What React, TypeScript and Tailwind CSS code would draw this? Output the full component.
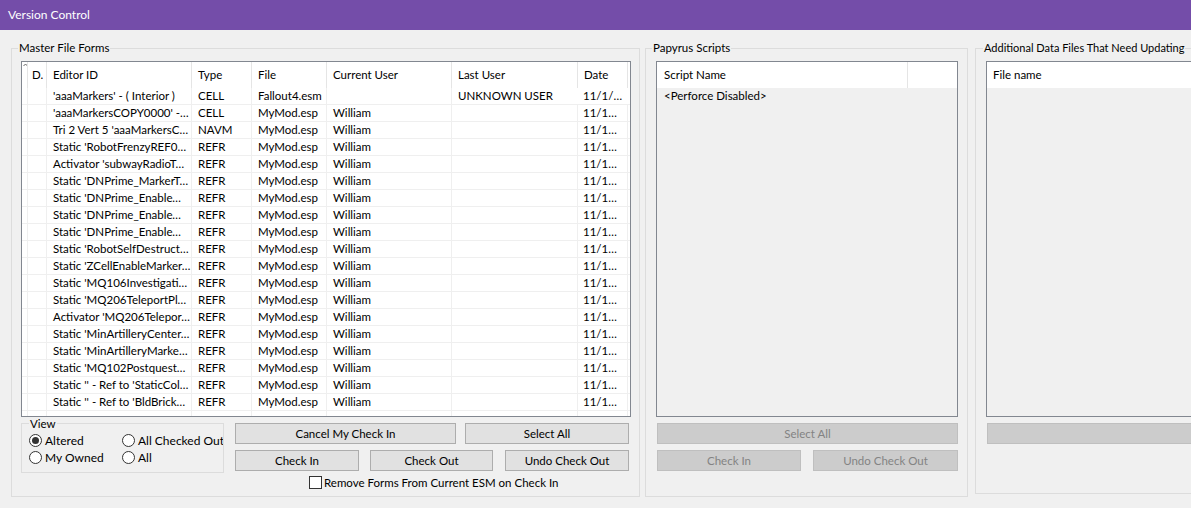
const rows = [
  { id: "'aaaMarkers' - ( Interior )", type: 'CELL', file: 'Fallout4.esm', cur: '', last: 'UNKNOWN USER', date: '11/1/…' },
  { id: "'aaaMarkersCOPY0000' - …", type: 'CELL', file: 'MyMod.esp', cur: 'William', last: '', date: '11/1…' },
  { id: "Tri 2 Vert 5 'aaaMarkersC…", type: 'NAVM', file: 'MyMod.esp', cur: 'William', last: '', date: '11/1…' },
  { id: "Static 'RobotFrenzyREF0…", type: 'REFR', file: 'MyMod.esp', cur: 'William', last: '', date: '11/1…' },
  { id: "Activator 'subwayRadioT…", type: 'REFR', file: 'MyMod.esp', cur: 'William', last: '', date: '11/1…' },
  { id: "Static 'DNPrime_MarkerTr…", type: 'REFR', file: 'MyMod.esp', cur: 'William', last: '', date: '11/1…' },
  { id: "Static 'DNPrime_EnableM…", type: 'REFR', file: 'MyMod.esp', cur: 'William', last: '', date: '11/1…' },
  { id: "Static 'DNPrime_EnableM…", type: 'REFR', file: 'MyMod.esp', cur: 'William', last: '', date: '11/1…' },
  { id: "Static 'DNPrime_EnableM…", type: 'REFR', file: 'MyMod.esp', cur: 'William', last: '', date: '11/1…' },
  { id: "Static 'RobotSelfDestruct…", type: 'REFR', file: 'MyMod.esp', cur: 'William', last: '', date: '11/1…' },
  { id: "Static 'ZCellEnableMarker…", type: 'REFR', file: 'MyMod.esp', cur: 'William', last: '', date: '11/1…' },
  { id: "Static 'MQ106Investigati…", type: 'REFR', file: 'MyMod.esp', cur: 'William', last: '', date: '11/1…' },
  { id: "Static 'MQ206TeleportPla…", type: 'REFR', file: 'MyMod.esp', cur: 'William', last: '', date: '11/1…' },
  { id: "Activator 'MQ206Telepor…", type: 'REFR', file: 'MyMod.esp', cur: 'William', last: '', date: '11/1…' },
  { id: "Static 'MinArtilleryCenter…", type: 'REFR', file: 'MyMod.esp', cur: 'William', last: '', date: '11/1…' },
  { id: "Static 'MinArtilleryMarker…", type: 'REFR', file: 'MyMod.esp', cur: 'William', last: '', date: '11/1…' },
  { id: "Static 'MQ102PostquestE…", type: 'REFR', file: 'MyMod.esp', cur: 'William', last: '', date: '11/1…' },
  { id: "Static '' - Ref to 'StaticCol…", type: 'REFR', file: 'MyMod.esp', cur: 'William', last: '', date: '11/1…' },
  { id: "Static '' - Ref to 'BldBrickS…", type: 'REFR', file: 'MyMod.esp', cur: 'William', last: '', date: '11/1…' },
]

const Button = ({ label, className, disabled }: { label: string; className: string; disabled?: boolean }) => (
  <div
    className={`h-[21px] shrink-0 flex items-center justify-center border whitespace-nowrap ${
      disabled ? 'bg-[#cccccc] border-[#bfbfbf] text-[#838383]' : 'bg-[#e1e1e1] border-[#adadad] text-black'
    } ${className}`}
  >
    {label}
  </div>
)

const Radio = ({ label, checked }: { label: string; checked?: boolean }) => (
  <div className="flex items-center h-[17px] whitespace-nowrap">
    <div className="w-[13px] h-[13px] shrink-0 rounded-full border border-[#333333] bg-white flex items-center justify-center">
      {checked && <div className="w-[7px] h-[7px] rounded-full bg-[#333333]" />}
    </div>
    <span className="ml-[3px] text-[12px]">{label}</span>
  </div>
)

const Cell = ({ w, children, pl = 'pl-[6px]', line = 'border-[#efefef]' }: { w: string; children?: React.ReactNode; pl?: string; line?: string }) => (
  <div className={`${w} ${pl} shrink-0 h-full border-r ${line} truncate`}>{children}</div>
)

const MasterTable = () => (
  <div className="w-[610px] h-[356px] border border-[#828790] bg-white overflow-hidden">
    <div className="flex h-[26px] leading-[26px]">
      <Cell w="w-[6px]" pl="pl-0" line="border-[#e5e5e5]">
        <svg width="5" height="4" viewBox="0 0 5 4" className="ml-[1px] mt-[1px] block">
          <path d="M0.5 3 L2.5 1 L4.5 3" fill="none" stroke="#555" strokeWidth="0.9" />
        </svg>
      </Cell>
      <Cell w="w-[19px]" pl="pl-[4px]" line="border-[#e5e5e5]">D.</Cell>
      <Cell w="w-[145px]" line="border-[#e5e5e5]">Editor ID</Cell>
      <Cell w="w-[60px]" line="border-[#e5e5e5]">Type</Cell>
      <Cell w="w-[75px]" line="border-[#e5e5e5]">File</Cell>
      <Cell w="w-[125px]" line="border-[#e5e5e5]">Current User</Cell>
      <Cell w="w-[126px]" line="border-[#e5e5e5]">Last User</Cell>
      <Cell w="w-[50px]" line="border-[#e5e5e5]">Date</Cell>
    </div>
    {[...rows, null].map((r, i) => (
      <div key={i} className="flex h-[17px] leading-[16px] border-b border-[#efefef]">
        <Cell w="w-[6px]" pl="pl-0" />
        <Cell w="w-[19px]" pl="pl-[4px]" />
        <Cell w="w-[145px]">{r?.id}</Cell>
        <Cell w="w-[60px]">{r?.type}</Cell>
        <Cell w="w-[75px]">{r?.file}</Cell>
        <Cell w="w-[125px]">{r?.cur}</Cell>
        <Cell w="w-[126px]" line={i === 0 ? 'border-white' : 'border-[#efefef]'}>{r?.last}</Cell>
        <Cell w="w-[50px]" pl="pl-[5px]" line={i === 0 ? 'border-white' : 'border-[#efefef]'}>{r?.date}</Cell>
      </div>
    ))}
  </div>
)

export default function App() {
  return (
    <div className="w-[1191px] h-[508px] overflow-hidden bg-[#f0f0f0] text-[11.5px] text-black" style={{ fontFamily: 'Lato, "Liberation Sans", Arial, sans-serif' }}>
      <div className="h-[30px] bg-[#744da9] text-white text-[12px] flex items-center pl-[8px]">Version Control</div>

      <div className="flex pl-[11px] pt-[11px]">
        {/* master file forms */}
        <fieldset className="w-[629px] min-w-0 h-[456px] shrink-0 border border-[#dcdcdc]">
          <legend className="ml-[6px] px-[1px] leading-[14px]">Master File Forms</legend>
          <div className="pl-[9px] mt-[6px]">
            <MasterTable />
            <div className="flex">
              <fieldset className="w-[203px] min-w-0 h-[56px] shrink-0 border border-[#dcdcdc] overflow-hidden">
                <legend className="ml-[7px] px-[1px] leading-[13px]">View</legend>
                <div className="grid grid-cols-[93px_100px] pl-[7px] mt-[2px]">
                  <Radio label="Altered" checked />
                  <Radio label="All Checked Out" />
                  <Radio label="My Owned" />
                  <Radio label="All" />
                </div>
              </fieldset>
              <div className="ml-[11px] mt-[6px] w-[394px] shrink-0">
                <div className="flex gap-[9px]">
                  <Button label="Cancel My Check In" className="w-[221px]" />
                  <Button label="Select All" className="w-[164px]" />
                </div>
                <div className="flex mt-[6px]">
                  <Button label="Check In" className="w-[124px]" />
                  <Button label="Check Out" className="w-[123px] ml-[11px]" />
                  <Button label="Undo Check Out" className="w-[124px] ml-[12px]" />
                </div>
                <div className="flex items-center mt-[5px] pl-[74px] h-[13px] whitespace-nowrap">
                  <div className="w-[13px] h-[13px] border border-[#333333] bg-white" />
                  <span className="ml-[2px]">Remove Forms From Current ESM on Check In</span>
                </div>
              </div>
            </div>
          </div>
        </fieldset>

        {/* papyrus scripts */}
        <fieldset className="w-[323px] min-w-0 h-[456px] shrink-0 ml-[5px] border border-[#dcdcdc]">
          <legend className="ml-[6px] px-[1px] leading-[14px]">Papyrus Scripts</legend>
          <div className="pl-[10px] mt-[6px]">
            <div className="w-[302px] h-[356px] border border-[#828790] bg-[#f0f0f0] overflow-hidden">
              <div className="flex h-[26px] leading-[26px] bg-white">
                <div className="w-[251px] pl-[7px] border-r border-[#e5e5e5]">Script Name</div>
              </div>
              <div className="h-[17px] leading-[16px] pl-[7px]">&lt;Perforce Disabled&gt;</div>
            </div>
            <div className="pl-[1px] mt-[6px]">
              <Button label="Select All" className="w-[301px]" disabled />
              <div className="flex mt-[6px]">
                <Button label="Check In" className="w-[144px]" disabled />
                <Button label="Undo Check Out" className="w-[145px] ml-[12px]" disabled />
              </div>
            </div>
          </div>
        </fieldset>

        {/* additional data files */}
        <fieldset className="w-[260px] min-w-0 h-[453px] shrink-0 ml-[7px] border border-[#dcdcdc]">
          <legend className="ml-[7px] px-[1px] leading-[14px] whitespace-nowrap text-[11px]">Additional Data Files That Need Updating</legend>
          <div className="pl-[10px] mt-[6px]">
            <div className="w-[240px] h-[356px] border border-[#828790] bg-[#f0f0f0] overflow-hidden">
              <div className="h-[26px] leading-[26px] bg-white pl-[6px]">File name</div>
            </div>
            <div className="pl-[1px] mt-[6px]">
              <Button label="" className="w-[239px]" disabled />
            </div>
          </div>
        </fieldset>
      </div>
    </div>
  )
}
